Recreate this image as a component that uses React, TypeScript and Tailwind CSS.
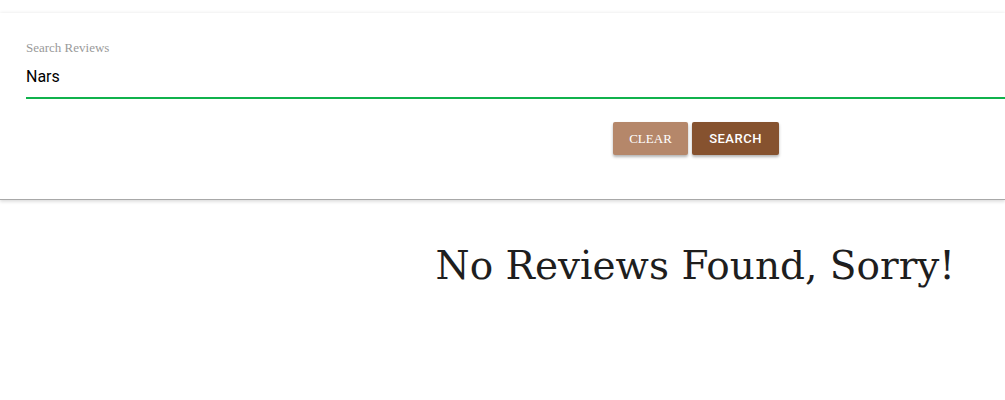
export default function App() {
  return (
    <div className="min-h-[400px] w-full bg-white overflow-hidden">
      <div className="mt-[13px] h-[187px] bg-white border-b border-[#a8a8a8] shadow-[0_-1px_3px_rgba(0,0,0,0.06),0_2px_3px_rgba(0,0,0,0.12)]">
        <div className="pl-[26px] pt-[28px]">
          <label className="block text-[13px] leading-[14px] text-[#9a9a9a] font-['Liberation_Serif',serif]">
            Search Reviews
          </label>
          <div className="mt-[12px] pb-[10px] border-b-2 border-[#10b24c] text-[16px] leading-[20px] text-black font-['Roboto','Liberation_Sans',sans-serif]">
            Nars
          </div>
        </div>
        <div className="mt-[23px] flex justify-end gap-[4px] pr-[226px]">
          <button className="h-[33px] w-[75px] rounded-[2px] bg-[#b5876a] text-white text-[13px] font-['Liberation_Serif',serif] shadow-[0_2px_3px_rgba(0,0,0,0.3)]">
            CLEAR
          </button>
          <button className="h-[33px] w-[87px] rounded-[2px] bg-[#86522f] text-white text-[13px] font-medium tracking-[0.5px] font-['Roboto','Liberation_Sans',sans-serif] shadow-[0_2px_3px_rgba(0,0,0,0.3)]">
            SEARCH
          </button>
        </div>
      </div>
      <div className="flex justify-end pr-[50px] pt-[42px]">
        <h1 className="text-[39px] leading-[48px] text-[#1e1e1e] font-['DejaVu_Serif',serif]">
          No Reviews Found, Sorry!
        </h1>
      </div>
    </div>
  );
}
